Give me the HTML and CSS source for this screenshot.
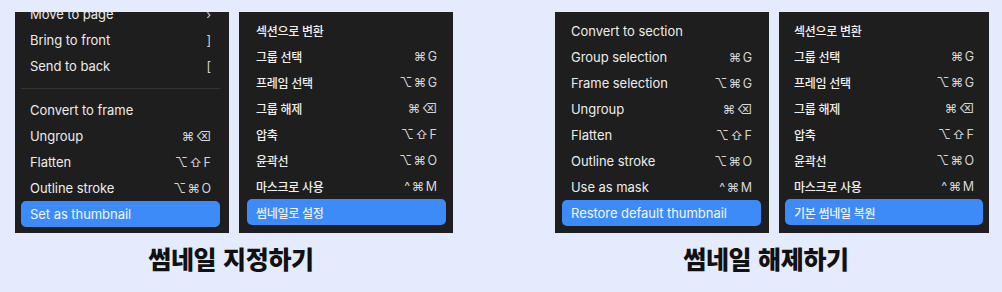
FILE: index.html
```html
<!DOCTYPE html>
<html lang="ko">
<head>
<meta charset="utf-8">
<title>Thumbnail menus</title>
<link rel="stylesheet" href="styles.css">
</head>
<body>
<main class="page">
  <section class="group group--set">
    <div class="menus">
      <div class="menu menu--cropped menu--a">
        <div class="list">
          <div class="item"><span class="label">Move to page</span><span class="key">›</span></div>
          <div class="item"><span class="label">Bring to front</span><span class="key">]</span></div>
          <div class="item"><span class="label">Send to back</span><span class="key">[</span></div>
          <div class="sep"></div>
          <div class="item"><span class="label">Convert to frame</span></div>
          <div class="item"><span class="label">Ungroup</span><span class="key">⌘⌫</span></div>
          <div class="item"><span class="label">Flatten</span><span class="key">⌥⇧F</span></div>
          <div class="item"><span class="label">Outline stroke</span><span class="key">⌥⌘O</span></div>
          <div class="item item--active"><span class="label">Set as thumbnail</span></div>
        </div>
      </div>
      <div class="menu ko menu--b">
        <div class="list">
          <div class="item"><span class="label">섹션으로 변환</span></div>
          <div class="item"><span class="label">그룹 선택</span><span class="key">⌘G</span></div>
          <div class="item"><span class="label">프레임 선택</span><span class="key">⌥⌘G</span></div>
          <div class="item"><span class="label">그룹 해제</span><span class="key">⌘⌫</span></div>
          <div class="item"><span class="label">압축</span><span class="key">⌥⇧F</span></div>
          <div class="item"><span class="label">윤곽선</span><span class="key">⌥⌘O</span></div>
          <div class="item"><span class="label">마스크로 사용</span><span class="key">^⌘M</span></div>
          <div class="item item--active"><span class="label">썸네일로 설정</span></div>
        </div>
      </div>
    </div>
    <h2 class="caption">썸네일 지정하기</h2>
  </section>

  <section class="group group--reset">
    <div class="menus">
      <div class="menu menu--c">
        <div class="list">
          <div class="item"><span class="label">Convert to section</span></div>
          <div class="item"><span class="label">Group selection</span><span class="key">⌘G</span></div>
          <div class="item"><span class="label">Frame selection</span><span class="key">⌥⌘G</span></div>
          <div class="item"><span class="label">Ungroup</span><span class="key">⌘⌫</span></div>
          <div class="item"><span class="label">Flatten</span><span class="key">⌥⇧F</span></div>
          <div class="item"><span class="label">Outline stroke</span><span class="key">⌥⌘O</span></div>
          <div class="item"><span class="label">Use as mask</span><span class="key">^⌘M</span></div>
          <div class="item item--active"><span class="label">Restore default thumbnail</span></div>
        </div>
      </div>
      <div class="menu ko menu--d">
        <div class="list">
          <div class="item"><span class="label">섹션으로 변환</span></div>
          <div class="item"><span class="label">그룹 선택</span><span class="key">⌘G</span></div>
          <div class="item"><span class="label">프레임 선택</span><span class="key">⌥⌘G</span></div>
          <div class="item"><span class="label">그룹 해제</span><span class="key">⌘⌫</span></div>
          <div class="item"><span class="label">압축</span><span class="key">⌥⇧F</span></div>
          <div class="item"><span class="label">윤곽선</span><span class="key">⌥⌘O</span></div>
          <div class="item"><span class="label">마스크로 사용</span><span class="key">^⌘M</span></div>
          <div class="item item--active"><span class="label">기본 썸네일 복원</span></div>
        </div>
      </div>
    </div>
    <h2 class="caption">썸네일 해제하기</h2>
  </section>
</main>
</body>
</html>
```

FILE: styles.css
```css
* { box-sizing: border-box; }

html, body {
  margin: 0;
  padding: 0;
  background: #e3ebfd;
}

body {
  width: 1002px;
  height: 292px;
  overflow: hidden;
  font-family: "Inter", "Noto Sans", "Noto Sans CJK KR", sans-serif;
}

.page {
  display: flex;
  padding: 12px 0 0 15px;
  gap: 102px;
}

.group {
  display: flex;
  flex-direction: column;
}

.menus {
  display: flex;
  gap: 10px;
}

.menu {
  width: 214px;
  height: 221px;
  background: #1e1e1e;
  overflow: hidden;
  padding: 5px 8px 0 7px;
}

.menu--a { padding: 0 9px 0 6px; }
.menu--a .list { margin-top: -11px; }
.menu--b { padding-left: 8px; padding-right: 7px; }
.menu--c { padding-left: 7px; padding-right: 8px; padding-top: 6px; }
.menu--d { width: 210px; padding-left: 6px; padding-right: 6px; }

.list {
  display: flex;
  flex-direction: column;
}

.item {
  display: flex;
  align-items: center;
  justify-content: space-between;
  height: 26px;
  padding: 0 9px;
  border-radius: 5px;
  color: #ececec;
  font-size: 13px;
  letter-spacing: -0.05px;
}

.ko .label {
  font-family: "Noto Sans CJK KR", sans-serif;
  font-size: 12px;
  font-weight: 500;
  letter-spacing: -0.3px;
  color: #f0f0f0;
}

.key {
  font-family: "Inter", "DejaVu Sans", sans-serif;
  font-size: 12.5px;
  color: #d6d6d6;
  letter-spacing: 1.5px;
  margin-right: -1.5px;
}

.item--active {
  background: #3d8bf8;
  color: #f4f8ff;
}

.sep {
  height: 18px;
  display: flex;
  align-items: center;
}

.sep::before {
  content: "";
  display: block;
  width: 100%;
  height: 1px;
  background: #343434;
}

.caption {
  margin: 9px 0 0;
  text-align: center;
  font-family: "Noto Sans CJK KR", sans-serif;
  font-weight: 900;
  font-size: 25px;
  line-height: 32px;
  letter-spacing: -0.3px;
  color: #111;
}

.group--set .caption { padding-right: 6px; }
.group--reset .caption { padding-right: 12px; }
```
